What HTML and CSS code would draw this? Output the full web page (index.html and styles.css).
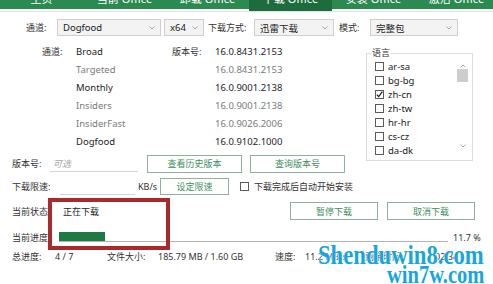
FILE: index.html
```html
<!DOCTYPE html>
<html>
<head>
	<title>Office Tool Plus</title>
<link rel="stylesheet" href="styles.css">
</head>
<body>
	<div class="tabs">
		<div class="tab">主页</div>
		<div class="tab">当前 Office</div>
		<div class="tab">卸载 Office</div>
		<div class="tab active">下载 Office</div>
		<div class="tab">安装 Office</div>
		<div class="tab">激活 Office</div>
	</div>

	<div class="toolbar">
		<span class="lbl lbl-channel">通道:</span>
		<div class="select sel-channel">Dogfood<svg class="arrow" width="6" height="4" viewBox="0 0 6 4"><path d="M0.5 0.5 L3 3 L5.5 0.5"/></svg></div>
		<div class="select sel-arch">x64<svg class="arrow" width="6" height="4" viewBox="0 0 6 4"><path d="M0.5 0.5 L3 3 L5.5 0.5"/></svg></div>
		<span class="lbl lbl-method">下载方式:</span>
		<div class="select sel-method">迅雷下载<svg class="arrow" width="6" height="4" viewBox="0 0 6 4"><path d="M0.5 0.5 L3 3 L5.5 0.5"/></svg></div>
		<span class="lbl lbl-mode">模式:</span>
		<div class="select sel-mode">完整包<svg class="arrow" width="6" height="4" viewBox="0 0 6 4"><path d="M0.5 0.5 L3 3 L5.5 0.5"/></svg></div>
	</div>

	<div class="upper">
		<div class="left">
			<div class="channels">
				<span class="lbl">通道:</span><span class="dark">Broad</span><span class="lbl">版本号:</span><span class="dark">16.0.8431.2153</span>
				<span></span><span class="gray">Targeted</span><span></span><span class="gray">16.0.8431.2153</span>
				<span></span><span class="dark">Monthly</span><span></span><span class="dark">16.0.9001.2138</span>
				<span></span><span class="gray">Insiders</span><span></span><span class="gray">16.0.9001.2138</span>
				<span></span><span class="gray">InsiderFast</span><span></span><span class="gray">16.0.9026.2006</span>
				<span></span><span class="dark">Dogfood</span><span></span><span class="dark">16.0.9102.1000</span>
			</div>
			<div class="row row-version">
				<span class="lbl w-version">版本号:</span>
				<div class="input in-version">可选</div>
				<button class="btn btn-history">查看历史版本</button>
				<button class="btn btn-query">查询版本号</button>
			</div>
		</div>

		<fieldset class="langs">
			<legend>语言</legend>
			<div class="langbox">
				<div class="langlist">
					<div class="lang"><span class="check"></span>ar-sa</div>
					<div class="lang"><span class="check"></span>bg-bg</div>
					<div class="lang"><span class="check"><svg width="9" height="9" viewBox="0 0 9 9"><path d="M1.8 4.6 L3.7 6.6 L7.3 1.6"/></svg></span>zh-cn</div>
					<div class="lang"><span class="check"></span>zh-tw</div>
					<div class="lang"><span class="check"></span>hr-hr</div>
					<div class="lang"><span class="check"></span>cs-cz</div>
					<div class="lang"><span class="check"></span>da-dk</div>
				</div>
				<div class="scrollbar">
					<svg class="sb-arrow" width="6" height="4" viewBox="0 0 6 4"><path d="M0.5 3.5 L3 1 L5.5 3.5"/></svg>
					<div class="thumb"></div>
					<div class="track"></div>
					<svg class="sb-arrow" width="6" height="4" viewBox="0 0 6 4"><path d="M0.5 0.5 L3 3 L5.5 0.5"/></svg>
				</div>
			</div>
		</fieldset>
	</div>

	<div class="row row-speed">
		<span class="lbl w-speed">下载限速:</span>
		<div class="input in-speed"></div>
		<span class="unit">KB/s</span>
		<button class="btn btn-limit">设定限速</button>
		<span class="check check-auto"></span>
		<span class="auto">下载完成后自动开始安装</span>
	</div>

	<div class="row row-status">
		<span class="lbl w-status">当前状态:</span>
		<span class="dark">正在下载</span>
		<div class="actions">
			<button class="btn btn-act">暂停下载</button>
			<button class="btn btn-act">取消下载</button>
		</div>
	</div>

	<div class="row row-progress">
		<span class="lbl w-progress">当前进度:</span>
		<div class="bar"><div class="fill" style="width: 11.7%"></div></div>
		<span class="pct">11.7 %</span>
	</div>

	<div class="row row-total">
		<span class="lbl w-total">总进度:</span>
		<span class="val w-count">4 / 7</span>
		<span class="lbl w-size-l">文件大小:</span>
		<span class="val w-size">185.79 MB / 1.60 GB</span>
		<span class="lbl w-speed-l">速度:</span>
		<span class="val w-rate">11.2 MB/s</span>
		<span class="lbl w-left-l">剩余时间:</span>
		<span class="val">02:34</span>
	</div>

	<div class="mark"></div>

	<div class="watermark">
		<span class="wm-1">Shenduwin8.com</span>
		<span class="wm-2">win7w.com</span>
	</div>
</body>
</html>
```

FILE: styles.css
```css
body {
  margin: 0;
  background: #fff;
  font-family: "Noto Sans", "Noto Sans CJK SC", sans-serif;
  font-size: 9px;
  color: #333;
  position: relative;
  height: 284px;
  overflow: hidden;
}

.tabs {
  display: flex;
  align-items: flex-start;
  height: 22px;
  margin-top: -11px;
  border-bottom: 1px solid #e4e4e4;
}

.tab {
  width: 83px;
  flex: none;
  height: 20px;
  line-height: 20px;
  text-align: center;
  background: #2a8a50;
  color: #fff;
  font-size: 11px;
}

.tab.active {
  height: 22px;
  background: #1d6c3e;
}

.toolbar {
  display: flex;
  align-items: center;
  height: 17px;
  margin-top: 7px;
  padding-left: 26px;
}

.lbl {
  color: #333;
  flex: none;
}

.lbl-channel { width: 31px; }
.lbl-method { width: 46px; margin-left: 4px; }
.lbl-mode { width: 31px; margin-left: 5px; }

.select {
  box-sizing: border-box;
  height: 17px;
  display: flex;
  align-items: center;
  justify-content: space-between;
  padding: 0 5px 0 5px;
  border: 1px solid #cfcfcf;
  background: #f3f3f3;
  color: #222;
  font-size: 9.5px;
  flex: none;
}

.sel-channel { width: 104px; }
.sel-arch { width: 40px; margin-left: 3px; }
.sel-method { width: 80px; }
.sel-mode { width: 88px; }

.arrow path, .sb-arrow path {
  fill: none;
  stroke: #a8a8a8;
  stroke-width: 1;
}

.upper {
  display: flex;
  align-items: flex-start;
}

.left {
  width: 366px;
  flex: none;
}

.channels {
  display: grid;
  grid-template-columns: 34px 96px 43px auto;
  grid-auto-rows: 18px;
  align-items: center;
  margin-top: 6px;
  padding-left: 42px;
  font-size: 9.5px;
}

.channels .lbl { font-size: 9px; }

.dark { color: #1e1e1e; }
.gray { color: #7a7a7a; }

.row {
  display: flex;
  align-items: center;
  padding-left: 12px;
}

.row-version {
  height: 19px;
  margin-top: 4px;
}

.w-version { width: 38px; }

.input {
  box-sizing: border-box;
  flex: none;
  height: 17px;
  line-height: 17px;
  border-bottom: 1px solid #d4d4d4;
}

.in-version {
  width: 88px;
  padding-left: 3px;
  color: #a8a8a8;
  font-style: italic;
}

.btn {
  box-sizing: border-box;
  flex: none;
  height: 18px;
  padding: 0;
  border: 1px solid #8fb09b;
  background: #fff;
  color: #3d8f5d;
  font-family: "Noto Sans", "Noto Sans CJK SC", sans-serif;
  font-size: 9px;
}

.btn-history { width: 95px; margin-left: 9px; }
.btn-query { width: 95px; margin-left: 8px; }

.langs {
  box-sizing: border-box;
  width: 107px;
  height: 113px;
  margin: 12px 0 0 0;
  padding: 0 4px 3px 4px;
  border: 1px solid #dcdcdc;
}

.langs legend {
  padding: 0 1px;
  line-height: 10px;
  color: #333;
}

.langbox {
  display: flex;
  margin-top: 1px;
}

.langlist {
  flex: 1;
  padding-left: 4px;
}

.lang {
  display: flex;
  align-items: center;
  height: 14px;
  font-size: 9.5px;
  color: #222;
}

.check {
  box-sizing: border-box;
  flex: none;
  width: 9px;
  height: 9px;
  margin-right: 4px;
  border: 1px solid #5a5a5a;
  background: #fff;
  position: relative;
}

.check svg {
  position: absolute;
  left: -1px;
  top: -1px;
}

.check path {
  fill: none;
  stroke: #1a1a1a;
  stroke-width: 1.2;
}

.scrollbar {
  width: 11px;
  display: flex;
  flex-direction: column;
  align-items: center;
  padding-top: 5px;
}

.thumb {
  width: 11px;
  height: 13px;
  margin-top: 1px;
  background: #cdcdcd;
}

.track {
  height: 62px;
}

.row-speed {
  height: 18px;
  margin-top: 4px;
}

.w-speed { width: 48px; }

.in-speed { width: 75px; }

.unit {
  width: 22px;
  margin-left: 3px;
  color: #333;
}

.btn-limit { width: 69px; height: 17px; }

.check-auto {
  margin-left: 11px;
  margin-right: 5px;
}

.auto { color: #333; }

.row-status {
  height: 18px;
  margin-top: 7px;
  padding-right: 18px;
}

.w-status { width: 51px; }

.actions {
  display: flex;
  gap: 9px;
  margin-left: auto;
}

.btn-act { width: 88px; }

.row-progress {
  height: 14px;
  margin-top: 10px;
}

.w-progress { width: 47px; }

.bar {
  box-sizing: border-box;
  width: 389px;
  height: 10px;
  flex: none;
  border-bottom: 1px solid #b5b5b5;
}

.fill {
  height: 9px;
  background: #1d7a45;
}

.pct {
  margin-left: 5px;
  color: #333;
}

.row-total {
  height: 12px;
  margin-top: 6px;
}

.val { color: #333; flex: none; }
.w-total { width: 43px; }
.w-count { width: 52px; }
.w-size-l { width: 51px; }
.w-size { width: 117px; }
.w-speed-l { width: 30px; }
.w-rate { width: 60px; }
.w-left-l { width: 70px; }

/* annotation drawn over the screenshot */
.mark {
  position: absolute;
  left: 48px;
  top: 198px;
  width: 122px;
  height: 52px;
  box-sizing: border-box;
  border: 4px solid #a82a2b;
}

.watermark {
  position: absolute;
  left: 0;
  top: 0;
  font-family: "Liberation Serif", serif;
  font-weight: bold;
  color: #17a6dc;
  text-shadow: 0 0 2px #fff, 1px 1px 0 #fff;
}

.wm-1 {
  position: absolute;
  left: 318px;
  top: 241px;
  font-size: 28px;
  line-height: 28px;
  white-space: nowrap;
  transform: scaleX(0.81);
  transform-origin: left top;
}

.wm-2 {
  position: absolute;
  left: 387px;
  top: 262px;
  font-size: 25px;
  line-height: 25px;
  white-space: nowrap;
  transform: scaleX(0.82);
  transform-origin: left top;
}
```
